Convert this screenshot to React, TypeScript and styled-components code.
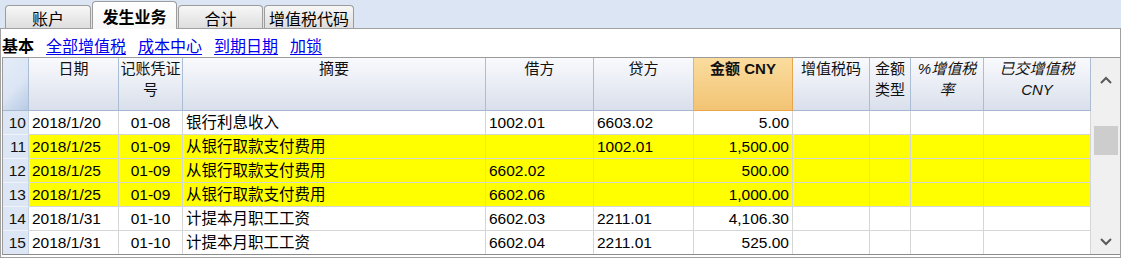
import styled, { createGlobalStyle } from 'styled-components';

const GlobalStyle = createGlobalStyle`
  html, body {
    margin: 0;
    padding: 0;
    background: #dbe5f3;
  }
  body {
    font-family: 'Liberation Sans', 'Noto Sans CJK SC', sans-serif;
    color: #000;
  }
`;

const Window = styled.div`
  width: 1121px;
  height: 258px;
  background: #dbe5f3;
  display: flex;
  flex-direction: column;
  overflow: hidden;
`;

const TabStrip = styled.div`
  height: 28px;
  flex-shrink: 0;
  display: flex;
  align-items: flex-end;
  gap: 1px;
  padding-left: 5px;
  box-sizing: border-box;
`;

const Tab = styled.div<{ $w: number; $active?: boolean }>`
  width: ${(p) => p.$w}px;
  height: ${(p) => (p.$active ? 28 : 23)}px;
  margin-bottom: ${(p) => (p.$active ? -1 : 0)}px;
  position: relative;
  z-index: ${(p) => (p.$active ? 1 : 0)};
  box-sizing: border-box;
  border: 1px solid #9c9c9c;
  border-bottom: none;
  border-radius: 4px 4px 0 0;
  background: ${(p) =>
    p.$active
      ? 'linear-gradient(to bottom, #ffffff, #f7f7f7)'
      : 'linear-gradient(to bottom, #f7f7f7, #dedede)'};
  display: flex;
  align-items: center;
  justify-content: center;
  padding-top: ${(p) => (p.$active ? 0 : 1)}px;
  font-family: 'Noto Sans CJK SC', sans-serif;
  font-size: 16px;
  font-weight: ${(p) => (p.$active ? 700 : 400)};
  line-height: 20px;
  color: #000;
`;

const Panel = styled.div`
  height: 230px;
  box-sizing: border-box;
  border: 1px solid #a0a0a0;
  background: #fff;
  display: flex;
  flex-direction: column;
`;

const SubBar = styled.div`
  height: 28px;
  box-sizing: border-box;
  display: flex;
  align-items: center;
  gap: 12px;
  padding: 3px 0 0 1px;
  font-family: 'Noto Sans CJK SC', sans-serif;
  font-size: 16px;
  line-height: 20px;
`;

const ViewName = styled.span`
  font-weight: 700;
  color: #000;
`;

const ViewLink = styled.a`
  color: #0000ee;
  text-decoration: underline;
  text-underline-offset: 2px;
  cursor: pointer;
`;

const TableWrap = styled.div`
  margin-left: 1px;
  display: flex;
  border-top: 1px solid #9a9a9a;
  border-left: 1px solid #9a9a9a;
  border-bottom: 1px solid #8c8c8c;
`;

const Grid = styled.div`
  display: flex;
  flex-direction: column;
`;

const HeadRow = styled.div`
  display: flex;
  height: 53px;
`;

const HeadCell = styled.div<{ $w: number; $accent?: boolean; $italic?: boolean }>`
  width: ${(p) => p.$w}px;
  flex-shrink: 0;
  box-sizing: border-box;
  border-right: 1px solid ${(p) => (p.$accent ? '#eaa54a' : '#aabdd5')};
  border-bottom: 1px solid ${(p) => (p.$accent ? '#eaa54a' : '#a6b9d2')};
  background: ${(p) =>
    p.$accent
      ? 'linear-gradient(to bottom, #fadc9e, #f2c474)'
      : 'linear-gradient(to bottom, #f9fafd, #d9dfeb)'};
  text-align: center;
  font-size: 15px;
  line-height: 21px;
  font-weight: ${(p) => (p.$accent ? 700 : 400)};
  font-style: ${(p) => (p.$italic ? 'italic' : 'normal')};
  color: #111;
`;

const CornerCell = styled.div`
  width: 26px;
  flex-shrink: 0;
  box-sizing: border-box;
  border-right: 1px solid #aabdd5;
  border-bottom: 1px solid #a6b9d2;
  background: linear-gradient(135deg, #e4ecf8 0%, #dbe5f4 55%, #b7cae4 100%);
`;

const Row = styled.div`
  display: flex;
  height: 24px;
  &:last-child {
    height: 23px;
  }
  &:last-child > div {
    border-bottom: none;
  }
`;

const Cell = styled.div<{ $w: number; $align?: 'left' | 'center' | 'right'; $hl?: boolean }>`
  width: ${(p) => p.$w}px;
  height: 100%;
  flex-shrink: 0;
  box-sizing: border-box;
  border-right: 1px solid #d6d6d6;
  border-bottom: 1px solid #d6d6d6;
  background: ${(p) => (p.$hl ? '#ffff00' : '#fff')};
  padding: 0 3px;
  text-align: ${(p) => p.$align ?? 'left'};
  font-size: 15.5px;
  line-height: 23px;
  white-space: nowrap;
  overflow: hidden;
`;

const IndexCell = styled.div`
  width: 26px;
  height: 100%;
  flex-shrink: 0;
  box-sizing: border-box;
  border-right: 1px solid #c6d3e5;
  border-bottom: 1px solid #eef2f9;
  background: #dce6f4;
  padding-right: 2px;
  text-align: right;
  font-size: 15.5px;
  line-height: 24px;
  color: #111;
`;

const ScrollBar = styled.div`
  width: 29px;
  background: #f0f0f0;
  display: flex;
  flex-direction: column;
`;

const ArrowButton = styled.div<{ $h: number }>`
  height: ${(p) => p.$h}px;
  display: flex;
  align-items: center;
  justify-content: center;
`;

const Track = styled.div`
  flex: 1;
  display: flex;
  flex-direction: column;
  align-items: center;
`;

const Thumb = styled.div`
  margin-top: 24px;
  width: 24px;
  height: 29px;
  background: #cdcdcd;
`;

const W = {
  date: 90,
  voucher: 64,
  desc: 303,
  debit: 108,
  credit: 100,
  amount: 99,
  vat: 77,
  type: 41,
  rate: 73,
  paid: 107,
};

type Entry = {
  n: number;
  date: string;
  voucher: string;
  desc: string;
  debit: string;
  credit: string;
  amount: string;
  hl?: boolean;
};

const rows: Entry[] = [
  { n: 10, date: '2018/1/20', voucher: '01-08', desc: '银行利息收入', debit: '1002.01', credit: '6603.02', amount: '5.00' },
  { n: 11, date: '2018/1/25', voucher: '01-09', desc: '从银行取款支付费用', debit: '', credit: '1002.01', amount: '1,500.00', hl: true },
  { n: 12, date: '2018/1/25', voucher: '01-09', desc: '从银行取款支付费用', debit: '6602.02', credit: '', amount: '500.00', hl: true },
  { n: 13, date: '2018/1/25', voucher: '01-09', desc: '从银行取款支付费用', debit: '6602.06', credit: '', amount: '1,000.00', hl: true },
  { n: 14, date: '2018/1/31', voucher: '01-10', desc: '计提本月职工工资', debit: '6602.03', credit: '2211.01', amount: '4,106.30' },
  { n: 15, date: '2018/1/31', voucher: '01-10', desc: '计提本月职工工资', debit: '6602.04', credit: '2211.01', amount: '525.00' },
];

function Chevron({ up }: { up?: boolean }) {
  return (
    <svg width="12" height="8" viewBox="0 0 12 8">
      <polyline
        points={up ? '1,7 6,2 11,7' : '1,1 6,6 11,1'}
        fill="none"
        stroke="#5a5a5a"
        strokeWidth="2"
      />
    </svg>
  );
}

export default function App() {
  return (
    <Window>
      <GlobalStyle />
      <TabStrip>
        <Tab $w={86}>账户</Tab>
        <Tab $w={85} $active>
          发生业务
        </Tab>
        <Tab $w={85}>合计</Tab>
        <Tab $w={90}>增值税代码</Tab>
      </TabStrip>
      <Panel>
        <SubBar>
          <ViewName>基本</ViewName>
          <ViewLink>全部增值税</ViewLink>
          <ViewLink>成本中心</ViewLink>
          <ViewLink>到期日期</ViewLink>
          <ViewLink>加锁</ViewLink>
        </SubBar>
        <TableWrap>
          <Grid>
            <HeadRow>
              <CornerCell />
              <HeadCell $w={W.date}>日期</HeadCell>
              <HeadCell $w={W.voucher}>
                记账凭证
                <br />号
              </HeadCell>
              <HeadCell $w={W.desc}>摘要</HeadCell>
              <HeadCell $w={W.debit}>借方</HeadCell>
              <HeadCell $w={W.credit}>贷方</HeadCell>
              <HeadCell $w={W.amount} $accent>
                金额 CNY
              </HeadCell>
              <HeadCell $w={W.vat}>增值税码</HeadCell>
              <HeadCell $w={W.type}>
                金额
                <br />
                类型
              </HeadCell>
              <HeadCell $w={W.rate} $italic>
                %增值税
                <br />率
              </HeadCell>
              <HeadCell $w={W.paid} $italic>
                已交增值税
                <br />
                CNY
              </HeadCell>
            </HeadRow>
            {rows.map((r) => (
              <Row key={r.n}>
                <IndexCell>{r.n}</IndexCell>
                <Cell $w={W.date} $hl={r.hl}>
                  {r.date}
                </Cell>
                <Cell $w={W.voucher} $hl={r.hl} $align="center">
                  {r.voucher}
                </Cell>
                <Cell $w={W.desc} $hl={r.hl}>
                  {r.desc}
                </Cell>
                <Cell $w={W.debit} $hl={r.hl}>
                  {r.debit}
                </Cell>
                <Cell $w={W.credit} $hl={r.hl}>
                  {r.credit}
                </Cell>
                <Cell $w={W.amount} $hl={r.hl} $align="right">
                  {r.amount}
                </Cell>
                <Cell $w={W.vat} $hl={r.hl} />
                <Cell $w={W.type} $hl={r.hl} />
                <Cell $w={W.rate} $hl={r.hl} />
                <Cell $w={W.paid} $hl={r.hl} />
              </Row>
            ))}
          </Grid>
          <ScrollBar>
            <ArrowButton $h={44}>
              <Chevron up />
            </ArrowButton>
            <Track>
              <Thumb />
            </Track>
            <ArrowButton $h={25}>
              <Chevron />
            </ArrowButton>
          </ScrollBar>
        </TableWrap>
      </Panel>
    </Window>
  );
}
